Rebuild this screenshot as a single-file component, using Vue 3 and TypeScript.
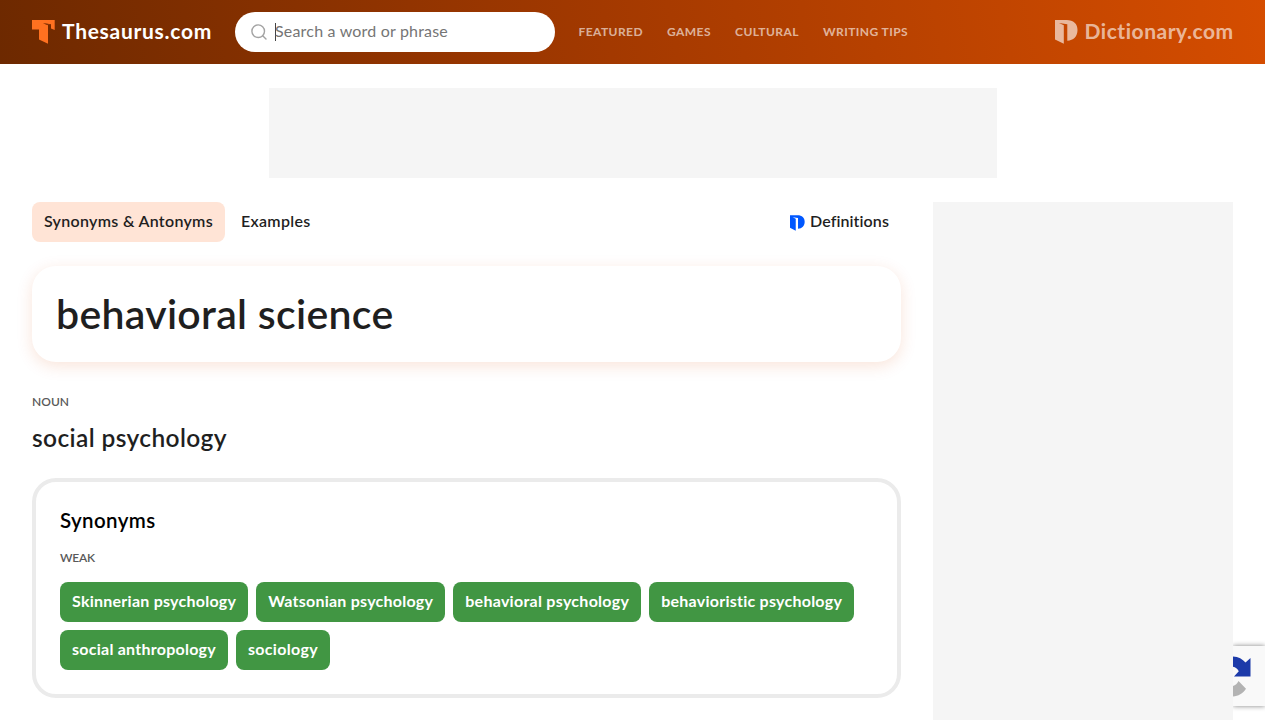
<script setup lang="ts">
interface Label {
  text: string
  width: number
}

const nav: Label[] = [
  { text: 'FEATURED', width: 64.5 },
  { text: 'GAMES', width: 44 },
  { text: 'CULTURAL', width: 64 },
  { text: 'WRITING TIPS', width: 85 },
]

const synonyms: Label[] = [
  { text: 'Skinnerian psychology', width: 164.2 },
  { text: 'Watsonian psychology', width: 165 },
  { text: 'behavioral psychology', width: 164 },
  { text: 'behavioristic psychology', width: 181.2 },
  { text: 'social anthropology', width: 144 },
  { text: 'sociology', width: 70 },
]

// Tracks a label out or in so that it fills the given width in pixels.
const vFit = {
  mounted(el: HTMLElement, binding: { value: number }) {
    el.style.letterSpacing = '0'
    const natural = el.getBoundingClientRect().width
    const count = (el.textContent ?? '').length
    el.style.letterSpacing = `${(binding.value - natural) / count}px`
  },
}
</script>

<template>
  <div class="page">
    <header class="header">
      <a class="brand">
        <svg class="mark" width="23" height="24" viewBox="0 0 23 24">
          <path fill="#ff7120" d="M0 0H22.7V10L19 8.4V4.2L11 3.2L16 5.2V23.7L7 19.4V9.5H0Z" />
          <path fill="#8e3504" d="M11 3.2L19 4.2V5.2L15.8 5.1Z" />
        </svg>
        <span v-fit="150" class="brand-name">Thesaurus.com</span>
      </a>
      <div class="search">
        <svg width="16" height="16" viewBox="0 0 16 16" fill="none" stroke="#a3a3a3" stroke-width="1.4">
          <circle cx="7.2" cy="7.2" r="6.3" />
          <path d="M11.7 11.7L15 15" stroke-linecap="round" />
        </svg>
        <span class="caret"></span>
        <span v-fit="173" class="placeholder">Search a word or phrase</span>
      </div>
      <nav class="nav">
        <span v-for="item in nav" :key="item.text" v-fit="item.width" class="nav-item">{{ item.text }}</span>
      </nav>
      <a class="brand sister">
        <svg class="mark" width="23" height="24" viewBox="0 0 23 24">
          <path fill="currentColor" d="M0 0H11.5C18.5 0 22.5 3.7 22.5 10.1C22.5 16.5 18.5 20.7 12.3 20.7V4.2L4 3.1L8.8 5.3V23.7L0 19.4Z" />
        </svg>
        <span v-fit="149.5" class="brand-name">Dictionary.com</span>
      </a>
    </header>

    <div class="banner"></div>

    <div class="columns">
      <main class="main">
        <div class="tabs">
          <div class="tab active"><span v-fit="169">Synonyms &amp; Antonyms</span></div>
          <div class="tab second"><span v-fit="69.5">Examples</span></div>
          <div class="tab definitions">
            <svg width="15" height="16" viewBox="0 0 23 24">
              <path fill="#0057ff" d="M0 0H11.5C18.5 0 22.5 3.7 22.5 10.1C22.5 16.5 18.5 20.7 12.3 20.7V4.2L4 3.1L8.8 5.3V23.7L0 19.4Z" />
            </svg>
            <span v-fit="79">Definitions</span>
          </div>
        </div>

        <section class="word"><h1 v-fit="337.5">behavioral science</h1></section>

        <div class="pos"><span v-fit="37">NOUN</span></div>
        <div class="sense"><h2 v-fit="195">social psychology</h2></div>

        <section class="card">
          <div class="card-title"><h3 v-fit="95.5">Synonyms</h3></div>
          <div class="strength"><span v-fit="35">WEAK</span></div>
          <div class="chips">
            <a v-for="s in synonyms" :key="s.text" class="chip"><span v-fit="s.width">{{ s.text }}</span></a>
          </div>
        </section>
      </main>
      <aside class="rail"></aside>
    </div>

    <div class="captcha">
      <svg width="32" height="60" viewBox="0 0 32 60">
        <path fill="#1c3aa9" d="M0 10.5C5.5 10.8 9.5 13 12.5 16.5L17.5 12V30.5H1L5.8 25.3C4.5 22.7 2.5 21.4 0 20.8Z" />
        <path fill="#b3b3b3" d="M5.5 35L13 42.7C9.8 47.5 5.3 50 0 50.5V40C2.4 39.4 4.3 37.7 5.5 35Z" />
      </svg>
    </div>
  </div>
</template>

<style>
body {
  margin: 0;
  background: #fff;
  overflow: hidden;
}
</style>

<style scoped>
.page {
  position: relative;
  width: 1265px;
  height: 720px;
  overflow: hidden;
  background: #fff;
  color: #1f1f1f;
  font-family: Lato, "Liberation Sans", sans-serif;
  font-size: 16px;
}
.page span,
.page h1,
.page h2,
.page h3 {
  display: inline-block;
  white-space: nowrap;
}
.header {
  display: flex;
  align-items: center;
  box-sizing: border-box;
  height: 64px;
  padding: 0 32px;
  background: linear-gradient(79.67deg, #6d2900 0%, #a33900 48%, #d54d00 100%);
}
.brand {
  display: flex;
  align-items: center;
  gap: 7px;
  width: 179px;
  color: #fff;
}
.brand-name {
  padding-bottom: 2px;
  font-size: 21px;
  font-weight: 700;
  line-height: 24px;
}
.mark {
  flex: none;
}
.search {
  display: flex;
  align-items: center;
  box-sizing: border-box;
  width: 320px;
  height: 40px;
  margin-left: 24px;
  padding-left: 16px;
  border-radius: 20px;
  background: #fff;
}
.caret {
  width: 1px;
  height: 18px;
  margin: 0 -1px 0 8px;
  background: #444;
}
.placeholder {
  padding-bottom: 2px;
  color: #757575;
  font-size: 16px;
  line-height: 20px;
}
.nav {
  display: flex;
  gap: 24px;
  margin-left: 23.5px;
  color: rgba(255, 255, 255, 0.62);
  font-size: 12px;
  font-weight: 700;
  line-height: 16px;
}
.sister {
  gap: 7px;
  width: 178.5px;
  margin-left: auto;
  color: rgba(255, 255, 255, 0.62);
}
.banner {
  width: 728px;
  height: 90px;
  margin: 24px auto;
  background: #f5f5f5;
}
.columns {
  display: flex;
  gap: 32px;
  padding: 0 32px;
}
.main {
  width: 869px;
}
.rail {
  width: 300px;
  height: 518px;
  background: #f5f5f5;
}
.tabs {
  display: flex;
  gap: 4px;
}
.tab {
  display: flex;
  align-items: center;
  height: 40px;
  padding: 0 12px;
  border-radius: 8px;
  font-weight: 600;
}
.tab span,
.chip span {
  padding-bottom: 2px;
  line-height: 20px;
}
.active {
  background: #ffe4d6;
}
.definitions {
  gap: 5px;
  margin-left: auto;
}
.definitions svg {
  margin-top: 2px;
}
.word {
  display: flex;
  align-items: center;
  box-sizing: border-box;
  height: 96px;
  margin-top: 24px;
  padding: 0 24px;
  border-radius: 24px;
  background: #fff;
  box-shadow: 0 4px 16px rgba(213, 77, 0, 0.15);
}
h1,
h2,
h3 {
  margin: 0;
  font-weight: 600;
}
h1 {
  font-size: 41px;
  line-height: 48px;
}
.pos {
  height: 16px;
  margin-top: 32px;
}
.pos,
.strength {
  color: #595959;
  font-size: 12px;
  font-weight: 600;
  line-height: 16px;
}
.sense {
  height: 32px;
  margin-top: 12px;
}
h2 {
  font-size: 24.5px;
  line-height: 32px;
}
.card {
  box-sizing: border-box;
  height: 220px;
  margin-top: 24px;
  padding: 24px;
  border: 4px solid #ebebeb;
  border-radius: 24px;
}
.card-title {
  height: 28px;
  color: #000;
}
h3 {
  font-size: 20.5px;
  line-height: 28px;
}
.strength {
  height: 16px;
  margin-top: 16px;
}
.chips {
  display: flex;
  flex-wrap: wrap;
  gap: 8px;
  margin-top: 16px;
}
.chip {
  display: flex;
  align-items: center;
  height: 40px;
  padding: 0 12px;
  border-radius: 8px;
  background: #419643;
  color: #fff;
  font-weight: 700;
}
.captcha {
  position: absolute;
  top: 646px;
  left: 1233px;
  width: 32px;
  height: 60px;
  background: #f9f9f9;
  box-shadow: 0 0 5px #808080;
  clip-path: inset(-8px 0 -8px 0);
}
</style>
